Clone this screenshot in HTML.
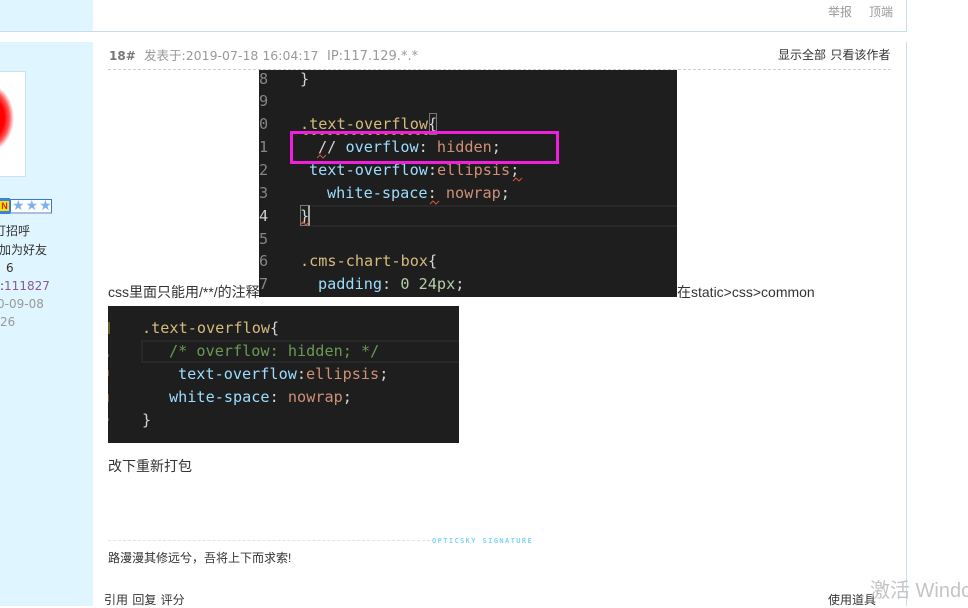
<!DOCTYPE html>
<html lang="zh">
<head>
<meta charset="utf-8">
<style>
html,body{margin:0;padding:0;background:#fff;}
body{position:relative;width:968px;height:606px;overflow:hidden;font-family:"Liberation Sans","Noto Sans CJK SC",sans-serif;font-size:12px;color:#333;}
.a{position:absolute;white-space:nowrap;}
.t{position:absolute;white-space:nowrap;line-height:16px;}
.d{font-family:"DejaVu Sans","Noto Sans CJK SC",sans-serif;}
.code{position:absolute;white-space:pre;font-family:"DejaVu Sans Mono",monospace;font-size:15.2px;line-height:23px;height:23px;}
.s{color:#d7ba7d}.p{color:#9cdcfe}.v{color:#ce9178}.w{color:#d4d4d4}.n{color:#b5cea8}.c{color:#6a9955}
.g{color:#858585}
</style>
</head>
<body>
<!-- sidebars and borders -->
<div class="a" style="left:0;top:0;width:93px;height:31px;background:#dff5ff"></div>
<div class="a" style="left:0;top:42px;width:93px;height:564px;background:#dff5ff"></div>
<div class="a" style="left:0;top:31px;width:907px;height:1px;background:#c5dfee"></div>
<div class="a" style="left:906px;top:0;width:1px;height:32px;background:#c5dfee"></div>
<div class="a" style="left:906px;top:42px;width:1px;height:564px;background:#c5dfee"></div>

<!-- top right -->
<div class="t" style="left:828px;top:4px;color:#999">举报</div>
<div class="t" style="left:869px;top:4px;color:#999">顶端</div>

<!-- avatar -->
<div class="a" style="left:-20px;top:71px;width:44px;height:104px;background:#fff;border:1px solid #c9e2ee"></div>
<div class="a" style="left:-38px;top:84px;width:52px;height:68px;border-radius:50%;background:radial-gradient(closest-side,#f00 0,#f00 62%,#ff5a5a 82%,#fff 100%)"></div>

<!-- badges -->
<div class="a" style="left:0;top:198px;width:10px;height:16px;background:#3b82e6"></div>
<div class="a" style="left:0;top:201px;width:9px;height:10px;background:#f5e400;color:#e02020;font:bold 9px/10px 'Liberation Sans',sans-serif;text-align:center">N</div>
<div class="a d" style="left:10px;top:199px;width:39px;height:12px;border:1px solid #2f78e0;border-bottom:2px solid #a9bfdc;background:#fff;color:#7fb2e8;font-size:14px;line-height:12px;letter-spacing:1px;overflow:hidden;padding-left:1px">★★★</div>

<!-- sidebar text -->
<div class="t" style="left:-6px;top:223px;color:#333">打招呼</div>
<div class="t" style="left:-1px;top:242px;color:#333">加为好友</div>
<div class="t d" style="left:6px;top:260px;font-size:12px;color:#333">6</div>
<div class="t d" style="left:0;top:278px;color:#333">:<span style="color:#8a5a96">111827</span></div>
<div class="t d" style="left:-3px;top:296px;color:#999">0-09-08</div>
<div class="t d" style="left:0;top:314px;color:#999">26</div>

<!-- post header -->
<div class="t d" style="left:109px;top:48px;font-size:12px;font-weight:bold;color:#777">18#</div>
<div class="t d" style="left:144px;top:48px;font-size:12.5px;color:#999">发表于:2019-07-18 16:04:17</div>
<div class="t d" style="left:327px;top:49px;font-size:13px;color:#999">IP:117.129.*.*</div>
<div class="t" style="left:778px;top:47px;color:#333;word-spacing:1px">显示全部 只看该作者</div>
<div class="a" style="left:108px;top:69px;width:783px;border-top:1px dashed #ccc"></div>

<!-- body text -->
<div class="t" style="left:108px;top:284px;color:#333;font-size:14px">css里面只能用/**/的注释</div>
<div class="t" style="left:677px;top:284px;color:#333;font-size:14px">在static&gt;css&gt;common</div>

<!-- code image 1 -->
<div class="a" style="left:259px;top:70px;width:418px;height:227px;background:#1e1e1e;overflow:hidden">
  <div class="a" style="left:52px;top:135px;width:366px;height:22px;border-top:2px solid #282828;border-bottom:2px solid #282828;box-sizing:border-box"></div>
  <div class="code g" style="left:0;top:-2px">8</div>
  <div class="code g" style="left:0;top:20px">9</div>
  <div class="code g" style="left:0;top:43px">0</div>
  <div class="code g" style="left:0;top:66px">1</div>
  <div class="code g" style="left:0;top:89px">2</div>
  <div class="code g" style="left:0;top:112px">3</div>
  <div class="code" style="left:0;top:135px;color:#d0d0d0">4</div>
  <div class="code g" style="left:0;top:158px">5</div>
  <div class="code g" style="left:0;top:180px">6</div>
  <div class="code g" style="left:0;top:203px">7</div>

  <div class="code w" style="left:41px;top:-2px">}</div>
  <div class="code s" style="left:41px;top:43px">.text-overflow<span class="w">{</span></div>
  <div class="a" style="left:170px;top:43px;width:6px;height:20px;border:1px solid #777"></div>
  <svg class="a" style="left:40px;top:60px" width="135" height="5"><path d="M1 3 q2 -3 4 0 t4 0 t4 0 t4 0 t4 0 t4 0 t4 0 t4 0 t4 0 t4 0 t4 0 t4 0 t4 0 t4 0 t4 0 t4 0 t4 0 t4 0 t4 0 t4 0 t4 0 t4 0 t4 0 t4 0 t4 0 t4 0 t4 0 t4 0 t4 0 t4 0 t4 0 t4 0" fill="none" stroke="#c9a13c" stroke-width="1.2"/></svg>

  <div class="code" style="left:59px;top:66px"><span class="w">//</span> <span class="p">overflow</span><span class="w">:</span> <span class="v">hidden</span><span class="w">;</span></div>
  <div class="code" style="left:50px;top:89px"><span class="p">text-overflow</span><span class="w">:</span><span class="v">ellipsis</span><span class="w">;</span></div>
  <div class="code" style="left:68px;top:112px"><span class="p">white-space</span><span class="w">:</span> <span class="v">nowrap</span><span class="w">;</span></div>
  <div class="code w" style="left:41px;top:135px">}</div>
  <div class="a" style="left:41px;top:135px;width:10px;height:21px;border:1px solid #777;border-right:2px solid #aaa;box-sizing:border-box"></div>
  <div class="code s" style="left:41px;top:180px">.cms-chart-box<span class="w">{</span></div>
  <div class="code" style="left:59px;top:203px"><span class="p">padding</span><span class="w">:</span> <span class="n">0</span> <span class="n">24px</span><span class="w">;</span></div>

  <svg class="a" style="left:0;top:0" width="418" height="227" fill="none" stroke="#d4553c" stroke-width="1">
    <path d="M58 88l3-3 3 3 3-3"/>
    <path d="M254 111l3-3 3 3 3-3"/>
    <path d="M171 134l3-3 3 3 3-3"/>
    <path d="M41 155l3-3 3 3 3-3"/>
  </svg>
</div>
<!-- magenta box -->
<div class="a" style="left:290px;top:131px;width:269px;height:33px;box-sizing:border-box;border:3px solid #f01fdc"></div>

<!-- code image 2 -->
<div class="a" style="left:108px;top:306px;width:351px;height:137px;background:#1e1e1e;overflow:hidden">
  <div class="a" style="left:0;top:16px;width:2px;height:12px;background:#6b5a30"></div>
  <div class="a" style="left:0;top:48px;width:1px;height:3px;background:#7a4a30"></div>
  <div class="a" style="left:0;top:64px;width:1px;height:6px;background:#7a4a30"></div>
  <div class="a" style="left:0;top:88px;width:1px;height:8px;background:#7a4a30"></div>
  <div class="a" style="left:0;top:112px;width:1px;height:3px;background:#7a4a30"></div>
  <div class="a" style="left:33px;top:34px;width:318px;height:23px;border:2px solid #282828;border-right:none;box-sizing:border-box"></div>
  <div class="code s" style="left:34px;top:11px">.text-overflow<span class="w">{</span></div>
  <div class="code c" style="left:61px;top:34px">/* overflow: hidden; */</div>
  <div class="code" style="left:70px;top:57px"><span class="p">text-overflow</span><span class="w">:</span><span class="v">ellipsis</span><span class="w">;</span></div>
  <div class="code" style="left:61px;top:80px"><span class="p">white-space</span><span class="w">:</span> <span class="v">nowrap</span><span class="w">;</span></div>
  <div class="code w" style="left:34px;top:103px">}</div>
</div>

<div class="t" style="left:108px;top:458px;color:#333;font-size:14px">改下重新打包</div>

<!-- signature -->
<div class="a" style="left:108px;top:540px;width:322px;border-top:1px dashed #e2e2e2"></div>
<div class="t" style="left:432px;top:533px;font-size:7px;font-weight:bold;letter-spacing:1.4px;color:#7fd4fb;font-family:'DejaVu Sans Mono',monospace">OPTICSKY SIGNATURE</div>
<div class="t" style="left:108px;top:550px;color:#333">路漫漫其修远兮，吾将上下而求索!</div>

<!-- footer -->
<div class="t" style="left:104px;top:592px;color:#333;word-spacing:1px">引用 回复 评分</div>
<div class="t" style="left:828px;top:592px;color:#333">使用道具</div>

<!-- watermark -->
<div class="t" style="left:870px;top:579px;font-size:20px;line-height:24px;color:#c4c4c4">激活 Windows</div>
</body>
</html>
